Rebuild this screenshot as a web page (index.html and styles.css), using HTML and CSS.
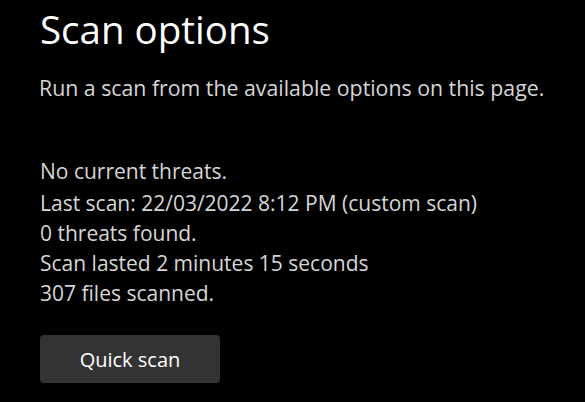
FILE: index.html
```html
<!DOCTYPE html>
<html lang="en">

<head>
    <meta charset="UTF-8">
    <title>Scan options</title>
    <link rel="stylesheet" href="styles.css">
</head>

<body>
    <div class="page">
        <h1 class="title">Scan options</h1>
        <p class="subtitle">Run a scan from the available options on this page.</p>

        <div class="status">
            <p class="status-head">No current threats.</p>
            <p>Last scan: 22/03/2022 8:12 PM (custom scan)</p>
            <p>0 threats found.</p>
            <p>Scan lasted 2 minutes 15 seconds</p>
            <p>307 files scanned.</p>
        </div>

        <button class="scan-btn">Quick scan</button>
    </div>
</body>

</html>
```

FILE: styles.css
```css
* {
    margin: 0;
    padding: 0;
    box-sizing: border-box;
}

body {
    background: #000;
    color: #d6d6d6;
    font-family: "Open Sans", "Noto Sans", sans-serif;
    overflow: hidden;
}

.page {
    padding: 4px 0 0 40px;
    display: flex;
    flex-direction: column;
    align-items: flex-start;
}

.title {
    font-size: 38.5px;
    font-weight: 400;
    line-height: 50px;
    color: #fff;
}

.subtitle {
    font-size: 21.3px;
    line-height: 28px;
    margin-top: 20px;
    margin-left: -1px;
}

.status {
    margin-top: 54px;
    font-size: 21px;
    line-height: 30px;
}

.status-head {
    margin-bottom: 2px;
}

.scan-btn {
    margin-top: 27px;
    width: 180px;
    height: 48px;
    background: #333;
    border: none;
    border-radius: 4px;
    color: #fff;
    font-family: inherit;
    font-size: 20px;
}
```
